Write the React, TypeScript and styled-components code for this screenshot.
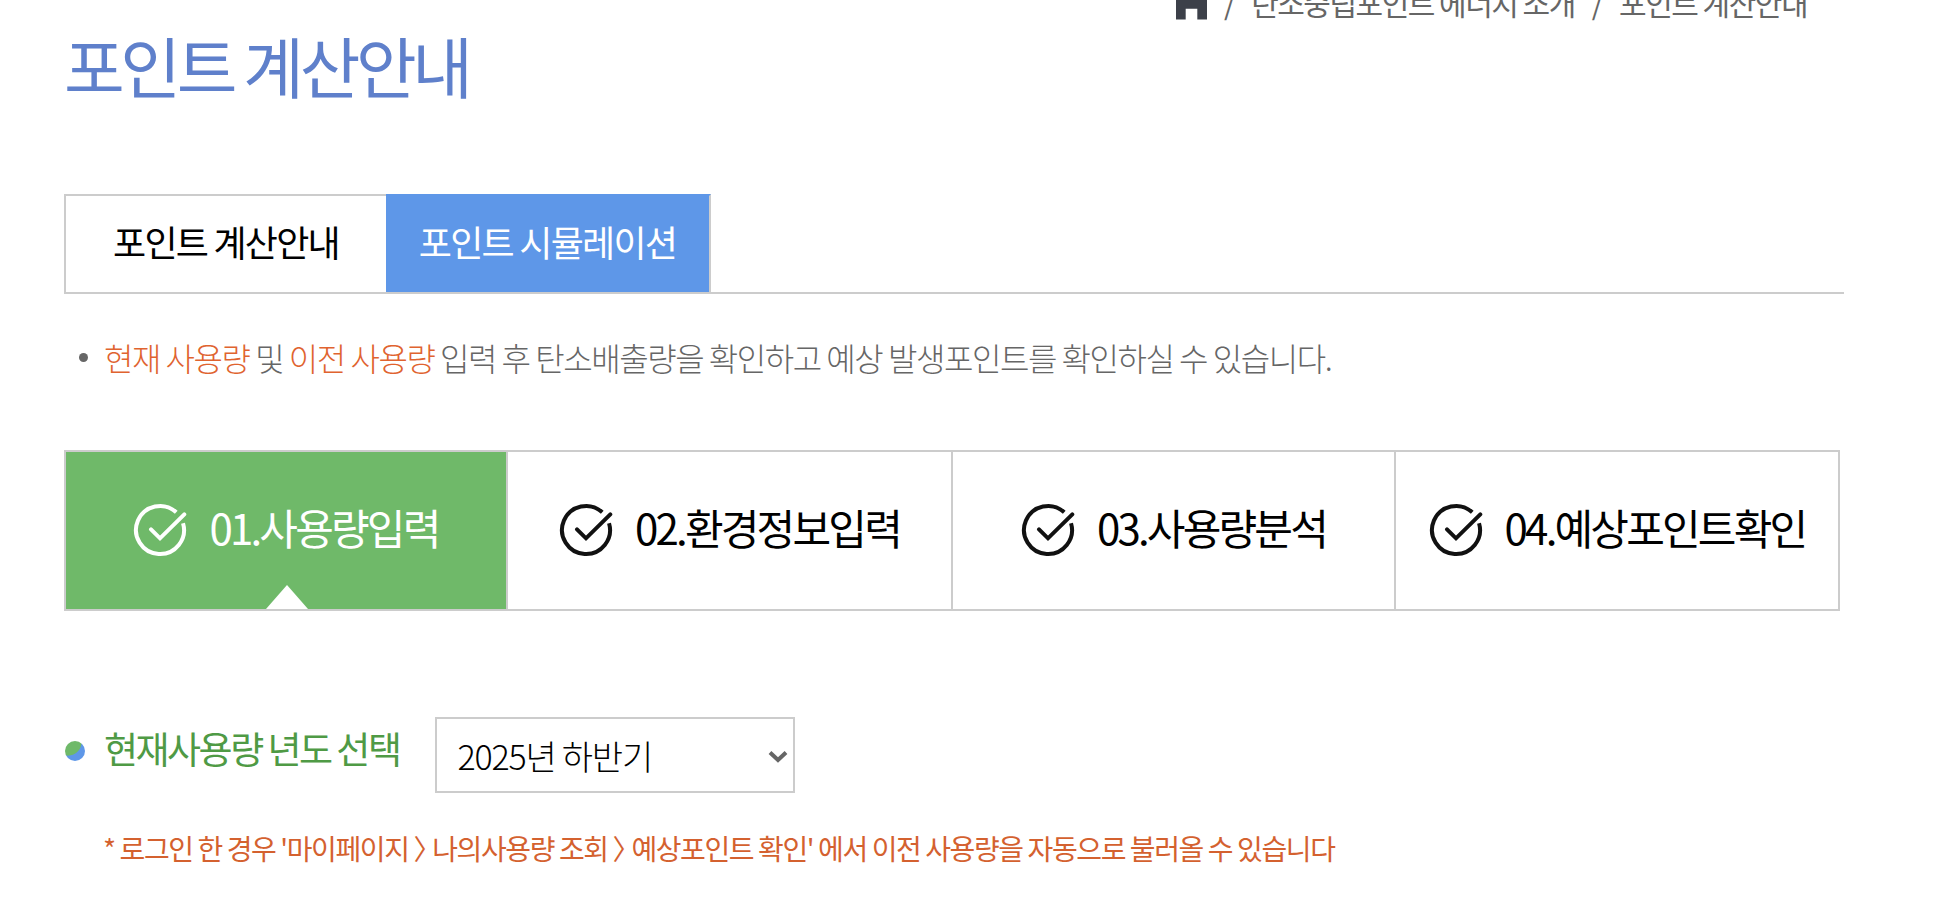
import React from "react";
import styled, { createGlobalStyle } from "styled-components";

const Global = createGlobalStyle`
  html, body { margin: 0; padding: 0; height: 906px; overflow: hidden; background: #fff; }
  body { font-family: "Noto Sans CJK KR", "Noto Sans", sans-serif; }
`;

const Page = styled.div`
  width: 1946px;
  padding-left: 64px;
  box-sizing: border-box;
  margin-top: -16px;
`;

const Breadcrumb = styled.nav`
  width: 1743px;
  height: 36px;
  display: flex;
  align-items: flex-end;
  justify-content: flex-end;
  gap: 17px;
  font-size: 30px;
  line-height: 36px;
  letter-spacing: -1.5px;
  color: #666;
`;

const HomeIcon = styled.svg`
  width: 31px;
  height: 36px;
  margin-right: 0;
  flex: none;
`;

const Title = styled.h1`
  margin: 2px 0 0;
  height: 84px;
  font-size: 66px;
  line-height: 84px;
  font-weight: 400;
  letter-spacing: -4.4px;
  color: #5f80cb;
`;

const TabBar = styled.div`
  margin-top: 88px;
  width: 1780px;
  display: flex;
  border-bottom: 2px solid #ccc;
`;

const Tab = styled.div<{ $active?: boolean }>`
  height: 98px;
  box-sizing: border-box;
  width: ${(p) => (p.$active ? "325px" : "322px")};
  padding-bottom: 6px;
  display: flex;
  align-items: center;
  justify-content: center;
  font-size: 36px;
  font-weight: 400;
  letter-spacing: -1.75px;
  color: ${(p) => (p.$active ? "#fff" : "#000")};
  background: ${(p) => (p.$active ? "#5e97e8" : "#fff")};
  border-top: 2px solid ${(p) => (p.$active ? "#5e97e8" : "#ccc")};
  border-left: ${(p) => (p.$active ? "none" : "2px solid #ccc")};
  border-right: ${(p) => (p.$active ? "2px solid #ccc" : "none")};
`;

const Notice = styled.p`
  margin: 43px 0 0;
  height: 40px;
  display: flex;
  align-items: center;
  font-size: 32px;
  line-height: 40px;
  font-weight: 300;
  letter-spacing: -1.45px;
  color: #666;
  white-space: pre;
  &::before {
    content: "";
    width: 9px;
    height: 9px;
    border-radius: 50%;
    background: #666;
    margin: 0 16px 0 15px;
  }
`;

const Accent = styled.span`
  color: #e0632f;
`;

const Steps = styled.ol`
  list-style: none;
  margin: 73px 0 0;
  padding: 0;
  width: 1776px;
  height: 161px;
  box-sizing: border-box;
  display: grid;
  grid-template-columns: 442px 445px 443px 1fr;
  border: 2px solid #ccc;
`;

const Step = styled.li<{ $active?: boolean; $last?: boolean }>`
  position: relative;
  display: flex;
  align-items: center;
  justify-content: center;
  gap: 22px;
  padding-bottom: 2px;
  box-sizing: border-box;
  font-size: 42px;
  font-weight: 400;
  letter-spacing: -2.8px;
  color: ${(p) => (p.$active ? "#fff" : "#000")};
  background: ${(p) => (p.$active ? "#6fb969" : "#fff")};
  border-right: ${(p) => (p.$last ? "none" : "2px solid #ccc")};
`;

const StepLabel = styled.span`
  margin-top: -6px;
`;

const Pointer = styled.span`
  position: absolute;
  left: 200px;
  bottom: 0;
  width: 0;
  height: 0;
  border-left: 21px solid transparent;
  border-right: 21px solid transparent;
  border-bottom: 24px solid #fff;
`;

const CheckIcon = styled.svg`
  width: 54px;
  height: 54px;
  flex: none;
`;

const SelectRow = styled.div`
  margin-top: 106px;
  display: flex;
  align-items: center;
`;

const Dot = styled.span`
  width: 20px;
  height: 20px;
  border-radius: 50%;
  background: radial-gradient(circle 14px at 3px 1px, #6fb969 94%, #5e97e8 100%);
  margin: -8px 19px 0 1px;
  flex: none;
`;

const Label = styled.label`
  font-size: 37px;
  line-height: 44px;
  font-weight: 400;
  letter-spacing: -2.5px;
  color: #4f9a45;
  margin: -15px 36px 0 0;
`;

const SelectWrap = styled.span`
  position: relative;
  display: block;
  width: 360px;
  height: 76px;
`;

const YearSelect = styled.select`
  appearance: none;
  display: block;
  width: 100%;
  height: 100%;
  box-sizing: border-box;
  border: 2px solid #ccc;
  border-radius: 0;
  background: #fff;
  padding-left: 20px;
  font-family: inherit;
  font-size: 34px;
  font-weight: 300;
  letter-spacing: -1.2px;
  color: #000;
`;

const Chevron = styled.svg`
  position: absolute;
  right: 7px;
  top: 33px;
  width: 20px;
  height: 13px;
  pointer-events: none;
`;

const Note = styled.p`
  margin: 35px 0 0 39px;
  font-size: 28px;
  line-height: 40px;
  letter-spacing: -1.4px;
  color: #d4612f;
`;

const Angle = styled.span`
  display: inline-block;
  width: 14px;
  height: 40px;
  overflow: hidden;
  vertical-align: top;
`;

const Check = ({ color }: { color: string }) => (
  <CheckIcon viewBox="0 0 54 54" fill="none" stroke={color}>
    <path d="M43.25 9.34A24 24 0 1 0 50.04 20.27" strokeWidth="4" />
    <path d="M18 26.3 L27 35.3 L51.3 11.3" strokeWidth="4" strokeLinecap="round" />
  </CheckIcon>
);

const steps = ["01.사용량입력", "02.환경정보입력", "03.사용량분석", "04.예상포인트확인"];

export default function App() {
  return (
    <Page>
      <Global />
      <Breadcrumb>
        <HomeIcon viewBox="0 0 32 36">
          <path d="M16 0 L32 15 V36 H22 V25 H10 V36 H0 V15 Z" fill="#3c4049" />
        </HomeIcon>
        <span>/</span>
        <span>탄소중립포인트 에너지 소개</span>
        <span>/</span>
        <span>포인트 계산안내</span>
      </Breadcrumb>
      <Title>포인트 계산안내</Title>
      <TabBar>
        <Tab>포인트 계산안내</Tab>
        <Tab $active>포인트 시뮬레이션</Tab>
      </TabBar>
      <Notice>
        <Accent>현재 사용량</Accent> 및 <Accent>이전 사용량</Accent> 입력 후 탄소배출량을 확인하고 예상 발생포인트를 확인하실 수 있습니다.
      </Notice>
      <Steps>
        {steps.map((s, i) => (
          <Step key={s} $active={i === 0} $last={i === 3}>
            <Check color={i === 0 ? "#fff" : "#111"} />
            <StepLabel>{s}</StepLabel>
            {i === 0 && <Pointer />}
          </Step>
        ))}
      </Steps>
      <SelectRow>
        <Dot />
        <Label htmlFor="year">현재사용량 년도 선택</Label>
        <SelectWrap>
          <YearSelect id="year" defaultValue="2025-2">
            <option value="2025-2">2025년 하반기</option>
            <option value="2025-1">2025년 상반기</option>
          </YearSelect>
          <Chevron viewBox="0 0 20 13" fill="none" stroke="#666" strokeWidth="4">
            <path d="M2 2.5 L10 10 L18 2.5" />
          </Chevron>
        </SelectWrap>
      </SelectRow>
      <Note>
        * 로그인 한 경우 '마이페이지 <Angle>〉</Angle> 나의사용량 조회 <Angle>〉</Angle> 예상포인트 확인' 에서 이전 사용량을 자동으로 불러올 수 있습니다
      </Note>
    </Page>
  );
}
